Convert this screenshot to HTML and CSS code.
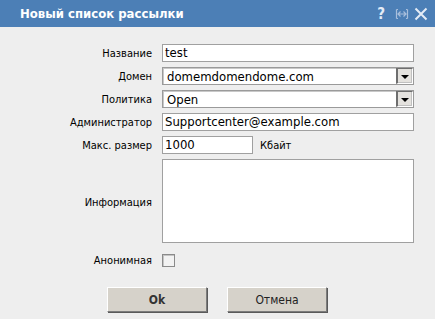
FILE: index.html
```html
<!DOCTYPE html>
<html>
<head>
<meta charset="utf-8">
<link rel="stylesheet" href="styles.css">
</head>
<body>
<div class="dialog">
  <div class="titlebar">
    <span class="title">Новый список рассылки</span>
    <div class="tools">
      <span class="help">?</span>
      <svg class="resize" width="14" height="12" viewBox="0 0 14 12"><path d="M1.5 1.5v9M12.5 1.5v9M3 6h8M5.5 3.5L3 6l2.5 2.5M8.5 3.5L11 6l-2.5 2.5M1.5 1.5h1.5M1.5 10.5h1.5M12.5 1.5h-1.5M12.5 10.5h-1.5" fill="none" stroke="#a9bfdc" stroke-width="1.2"/></svg>
      <svg class="close" width="14" height="14" viewBox="0 0 14 14"><path d="M1.5 1.5l11 11M12.5 1.5l-11 11" stroke="#e4ecf6" stroke-width="2"/></svg>
    </div>
  </div>
  <div class="form">
    <label class="lbl">Название</label>
    <div class="field"><div class="input">test</div></div>

    <label class="lbl">Домен</label>
    <div class="field"><div class="select"><span class="val">domemdomendome.com</span><span class="arrow"><svg width="8" height="4" viewBox="0 0 8 4"><path d="M0 0h8L4 4z" fill="#000"/></svg></span></div></div>

    <label class="lbl">Политика</label>
    <div class="field"><div class="select"><span class="val">Open</span><span class="arrow"><svg width="8" height="4" viewBox="0 0 8 4"><path d="M0 0h8L4 4z" fill="#000"/></svg></span></div></div>

    <label class="lbl">Администратор</label>
    <div class="field"><div class="input">Supportcenter@example.com</div></div>

    <label class="lbl">Макс. размер</label>
    <div class="field size"><div class="input short">1000</div><span class="unit">Кбайт</span></div>

    <label class="lbl info">Информация</label>
    <div class="field info"><div class="textarea"></div></div>

    <label class="lbl anon">Анонимная</label>
    <div class="field anon"><span class="checkbox"></span></div>
  </div>
  <div class="buttons">
    <button class="btn ok">Ok</button>
    <button class="btn">Отмена</button>
  </div>
</div>
</body>
</html>
```
FILE: styles.css
```css
html, body {
  margin: 0;
  padding: 0;
  background: #eeeeee;
}
body {
  width: 435px;
  height: 319px;
  overflow: hidden;
  font-family: "DejaVu Sans Condensed", "DejaVu Sans", sans-serif;
}
.dialog {
  display: flex;
  flex-direction: column;
  height: 319px;
}
.titlebar {
  height: 27px;
  background: #4c7fb6;
  display: flex;
  align-items: center;
  padding: 0 7px 0 20px;
}
.title {
  color: #ffffff;
  font-weight: bold;
  font-size: 13px;
  flex: 1;
}
.tools {
  display: flex;
  align-items: center;
  gap: 5px;
}
.help {
  color: #e4ecf6;
  font-weight: bold;
  font-size: 15px;
  margin-right: 5px;
}
.form {
  display: grid;
  grid-template-columns: 152px 252px;
  column-gap: 10px;
  row-gap: 5px;
  padding-top: 17px;
  grid-auto-rows: 18px;
}
.lbl {
  font-size: 11px;
  color: #000;
  text-align: right;
  display: flex;
  align-items: center;
  justify-content: flex-end;
}
.field {
  display: flex;
  align-items: center;
}
.input {
  box-sizing: border-box;
  height: 18px;
  width: 252px;
  background: #fff;
  border: 1px solid #a0a0a0;
  font-size: 13px;
  line-height: 16px;
  padding-left: 2px;
  white-space: nowrap;
  overflow: hidden;
}
.input.short {
  width: 91px;
}
.unit {
  font-size: 11px;
  margin-left: 7px;
}
.select {
  box-sizing: border-box;
  height: 18px;
  width: 252px;
  background: #fff;
  border: 1px solid #9a9a9a;
  box-shadow: inset 1px 1px 0 #c8c8c8;
  display: flex;
  align-items: center;
  padding-left: 4px;
}
.val {
  flex: 1;
  font-size: 13px;
}
.arrow {
  box-sizing: border-box;
  width: 17px;
  height: 16px;
  background: #e4e2de;
  border-left: 2px solid #6e6e6e;
  border-top: 1px solid #6e6e6e;
  border-right: 1px solid #fff;
  border-bottom: 1px solid #fff;
  box-shadow: inset -1px -1px 0 #c0c0c0;
  display: flex;
  align-items: center;
  justify-content: center;
  padding-top: 2px;
}
.lbl.info, .field.info {
  grid-row: span 4;
}
.field.info {
  align-items: flex-start;
}
.textarea {
  box-sizing: border-box;
  width: 252px;
  height: 84px;
  background: #fff;
  border: 1px solid #a0a0a0;
}
.lbl.anon, .field.anon {
  margin-top: 1px;
}
.checkbox {
  box-sizing: border-box;
  width: 13px;
  height: 13px;
  background: #f2f2f2;
  border: 1px solid #8a8a8a;
  box-shadow: inset 1px 1px 0 #c4c4c4;
}
.buttons {
  display: flex;
  gap: 20px;
  padding-left: 107px;
  margin-top: 18px;
}
.btn {
  box-sizing: border-box;
  width: 100px;
  height: 25px;
  background: #d6d2ca;
  border: 1px solid;
  border-color: #ffffff #7c7c7c #7c7c7c #ffffff;
  box-shadow: 1px 1px 0 #5a5a5a;
  font-family: "DejaVu Sans Condensed", "DejaVu Sans", sans-serif;
  font-size: 12px;
  color: #222;
  padding: 0;
}
.btn.ok {
  font-weight: bold;
  color: #333;
}
```
